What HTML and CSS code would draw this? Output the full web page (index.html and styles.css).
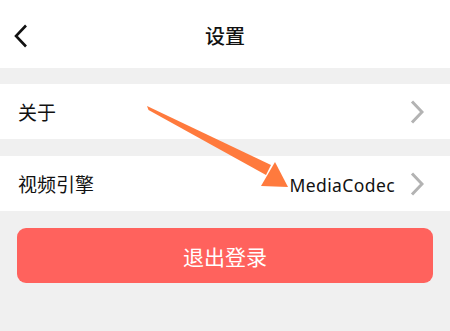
FILE: index.html
```html
<!DOCTYPE html>
<html>
<head>
<meta charset="utf-8">
<link rel="stylesheet" href="styles.css">
</head>
<body>
<div class="page">
  <header class="header">
    <svg class="back" width="16" height="24" viewBox="0 0 16 24"><path d="M13 1.5 L3 12 L13 22.5" fill="none" stroke="#111" stroke-width="2.6"/></svg>
    <div class="title">设置</div>
  </header>
  <div class="gap"></div>
  <div class="row">
    <span class="label">关于</span>
    <svg class="chev" width="14" height="24" viewBox="0 0 14 24"><path d="M2 1.5 L12 12 L2 22.5" fill="none" stroke="#b3b3b3" stroke-width="3"/></svg>
  </div>
  <div class="gap"></div>
  <div class="row">
    <span class="label">视频引擎</span>
    <span class="value">MediaCodec</span>
    <svg class="chev" width="14" height="24" viewBox="0 0 14 24"><path d="M2 1.5 L12 12 L2 22.5" fill="none" stroke="#b3b3b3" stroke-width="3"/></svg>
  </div>
  <div class="bottom">
    <button class="logout">退出登录</button>
  </div>
  <svg class="arrow" width="450" height="331" viewBox="0 0 450 331">
    <polygon points="147,106 148.5,110 266,175 271,165" fill="#ff7a3d"/>
    <polygon points="275,162 261,186 288,187" fill="#ff7a3d"/>
  </svg>
</div>
</body>
</html>
```

FILE: styles.css
```css
html, body { margin: 0; padding: 0; }
body { width: 450px; height: 331px; overflow: hidden; background: #f0f0f0; font-family: "Noto Sans", "Noto Sans CJK SC", sans-serif; }
.page { position: relative; width: 450px; height: 331px; display: flex; flex-direction: column; }
.header { height: 68px; background: #fff; display: flex; align-items: center; justify-content: center; position: relative; }
.back { position: absolute; left: 13px; top: 24px; }
.title { font-family: "Noto Sans CJK SC", sans-serif; font-size: 20px; font-weight: 500; color: #111; margin-top: 2px; }
.gap { height: 16px; background: #f0f0f0; }
.row { height: 55px; background: #fff; display: flex; align-items: center; padding: 0 26px 0 18px; }
.row + .gap { height: 17px; }
.label { font-family: "Noto Sans CJK SC", sans-serif; font-size: 19px; color: #111; flex: 1; }
.value { font-family: "Noto Sans", sans-serif; font-size: 17.5px; letter-spacing: 0.4px; color: #111; margin-right: 15px; margin-top: 2px; }
.chev { display: block; }
.bottom { flex: 1; padding: 17px 17px 0 17px; }
.logout { width: 416px; height: 55px; border: none; border-radius: 9px; background: #ff625d; color: #fff; font-family: "Noto Sans CJK SC", sans-serif; font-size: 21px; display: block; padding: 0; }
.arrow { position: absolute; left: 0; top: 0; pointer-events: none; }
```
